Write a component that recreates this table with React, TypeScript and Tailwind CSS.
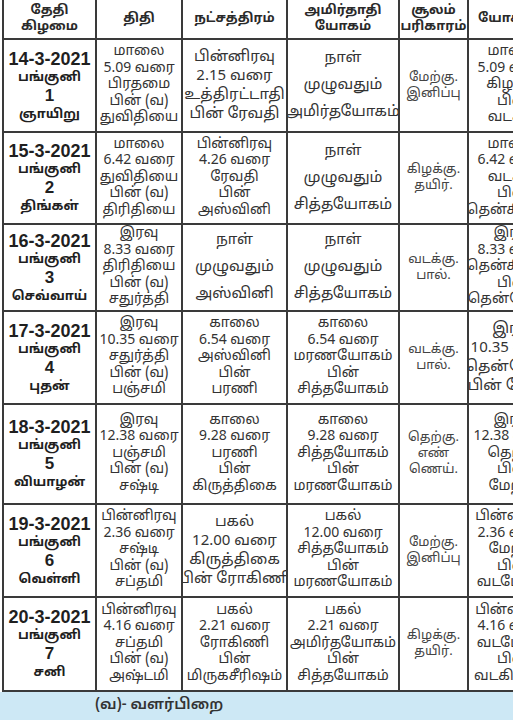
const tamil = { fontFamily: '"Noto Sans Tamil", "Latha", "Noto Sans", "DejaVu Sans", sans-serif' };
const latin = { fontFamily: '"Liberation Sans", Arial, sans-serif' };

type Row = {
  date: string;
  day: string;
  num: string;
  weekday: string;
  cells: string[][];
};

const rows: Row[] = [
  {
    date: "14-3-2021",
    day: "பங்குனி",
    num: "1",
    weekday: "ஞாயிறு",
    cells: [
      ["மாலை", "5.09 வரை", "பிரதமை", "பின் (வ)", "துவிதியை"],
      ["பின்னிரவு", "2.15 வரை", "உத்திரட்டாதி", "பின் ரேவதி"],
      ["நாள்", "முழுவதும்", "அமிர்தயோகம்"],
      ["மேற்கு.", "இனிப்பு"],
      ["மாலை", "5.09 வரை", "கிழக்கு", "பின்", "வடக்கு"],
    ],
  },
  {
    date: "15-3-2021",
    day: "பங்குனி",
    num: "2",
    weekday: "திங்கள்",
    cells: [
      ["மாலை", "6.42 வரை", "துவிதியை", "பின் (வ)", "திரிதியை"],
      ["பின்னிரவு", "4.26 வரை", "ரேவதி", "பின்", "அஸ்வினி"],
      ["நாள்", "முழுவதும்", "சித்தயோகம்"],
      ["கிழக்கு.", "தயிர்."],
      ["மாலை", "6.42 வரை", "வடக்கு", "பின்", "தென்கிழக்கு"],
    ],
  },
  {
    date: "16-3-2021",
    day: "பங்குனி",
    num: "3",
    weekday: "செவ்வாய்",
    cells: [
      ["இரவு", "8.33 வரை", "திரிதியை", "பின் (வ)", "சதுர்த்தி"],
      ["நாள்", "முழுவதும்", "அஸ்வினி"],
      ["நாள்", "முழுவதும்", "சித்தயோகம்"],
      ["வடக்கு.", "பால்."],
      ["இரவு", "8.33 வரை", "தென்கிழக்கு", "பின்", "தென்மேற்கு"],
    ],
  },
  {
    date: "17-3-2021",
    day: "பங்குனி",
    num: "4",
    weekday: "புதன்",
    cells: [
      ["இரவு", "10.35 வரை", "சதுர்த்தி", "பின் (வ)", "பஞ்சமி"],
      ["காலை", "6.54 வரை", "அஸ்வினி", "பின்", "பரணி"],
      ["காலை", "6.54 வரை", "மரணயோகம்", "பின்", "சித்தயோகம்"],
      ["வடக்கு.", "பால்."],
      ["இரவு", "10.35 வரை", "தென்மேற்கு", "பின் மேற்கு"],
    ],
  },
  {
    date: "18-3-2021",
    day: "பங்குனி",
    num: "5",
    weekday: "வியாழன்",
    cells: [
      ["இரவு", "12.38 வரை", "பஞ்சமி", "பின் (வ)", "சஷ்டி"],
      ["காலை", "9.28 வரை", "பரணி", "பின்", "கிருத்திகை"],
      ["காலை", "9.28 வரை", "சித்தயோகம்", "பின்", "மரணயோகம்"],
      ["தெற்கு.", "எண்", "ணெய்."],
      ["இரவு", "12.38 வரை", "தெற்கு", "பின்", "மேற்கு"],
    ],
  },
  {
    date: "19-3-2021",
    day: "பங்குனி",
    num: "6",
    weekday: "வெள்ளி",
    cells: [
      ["பின்னிரவு", "2.36 வரை", "சஷ்டி", "பின் (வ)", "சப்தமி"],
      ["பகல்", "12.00 வரை", "கிருத்திகை", "பின் ரோகிணி"],
      ["பகல்", "12.00 வரை", "சித்தயோகம்", "பின்", "மரணயோகம்"],
      ["மேற்கு.", "இனிப்பு"],
      ["பின்னிரவு", "2.36 வரை", "மேற்கு", "பின்", "வடமேற்கு"],
    ],
  },
  {
    date: "20-3-2021",
    day: "பங்குனி",
    num: "7",
    weekday: "சனி",
    cells: [
      ["பின்னிரவு", "4.16 வரை", "சப்தமி", "பின் (வ)", "அஷ்டமி"],
      ["பகல்", "2.21 வரை", "ரோகிணி", "பின்", "மிருகசீரிஷம்"],
      ["பகல்", "2.21 வரை", "அமிர்தயோகம்", "பின்", "சித்தயோகம்"],
      ["கிழக்கு.", "தயிர்."],
      ["பின்னிரவு", "4.16 வரை", "வடமேற்கு", "பின்", "வடகிழக்கு"],
    ],
  },
];

const headers = [["தேதி", "கிழமை"], ["திதி"], ["நட்சத்திரம்"], ["அமிர்தாதி", "யோகம்"], ["சூலம்", "பரிகாரம்"], ["யோகினி"]];

const cell = "border-r-2 border-b-2 border-[#3a3a3a] flex flex-col items-center justify-center text-center overflow-hidden";

// spacing of the lines follows how many there are in a cell
function lineClass(col: number, count: number) {
  if (col === 3) return "text-[13px] leading-[16px] text-[#444]";
  if (count <= 3) return "text-[15px] leading-[27px]";
  if (count === 4) return "text-[15px] leading-[19px]";
  return "text-[14px] leading-[16.5px]";
}

export default function App() {
  return (
    <div className="w-[513px] h-[720px] bg-white overflow-hidden" style={tamil}>
      <div className="ml-[2px] w-[600px] border-l-2 border-[#3a3a3a] grid grid-cols-[93px_86px_105px_112px_69px_90px] grid-rows-[40px_93px_92px_87px_93px_100px_93px_94px]">
        {headers.map((h, i) => (
          <div key={i} className={`${cell} font-bold text-[13px] leading-[16px] text-[#2a2a2a]`}>
            {h.map((t) => (
              <span key={t}>{t}</span>
            ))}
          </div>
        ))}
        {rows.map((r) => (
          <div key={r.date} className="contents">
            <div className={`${cell} font-bold text-[#1f1f1f] pt-[2px]`}>
              <span className="text-[18px] leading-[20px]" style={latin}>
                {r.date}
              </span>
              <span className="text-[13px] leading-[18px]">{r.day}</span>
              <span className="text-[17px] leading-[18px]" style={latin}>
                {r.num}
              </span>
              <span className="text-[13px] leading-[20px]">{r.weekday}</span>
            </div>
            {r.cells.map((c, j) => (
              <div key={j} className={`${cell} text-[#333] ${lineClass(j, c.length)}`}>
                {c.map((t, k) => (
                  <span key={k} className="whitespace-nowrap">
                    {t}
                  </span>
                ))}
              </div>
            ))}
          </div>
        ))}
      </div>
      <div className="h-[28px] bg-[#cde8f5] flex items-center pl-[95px] text-[15px] font-semibold text-[#333]">
        (வ)- வளர்பிறை
      </div>
    </div>
  );
}
